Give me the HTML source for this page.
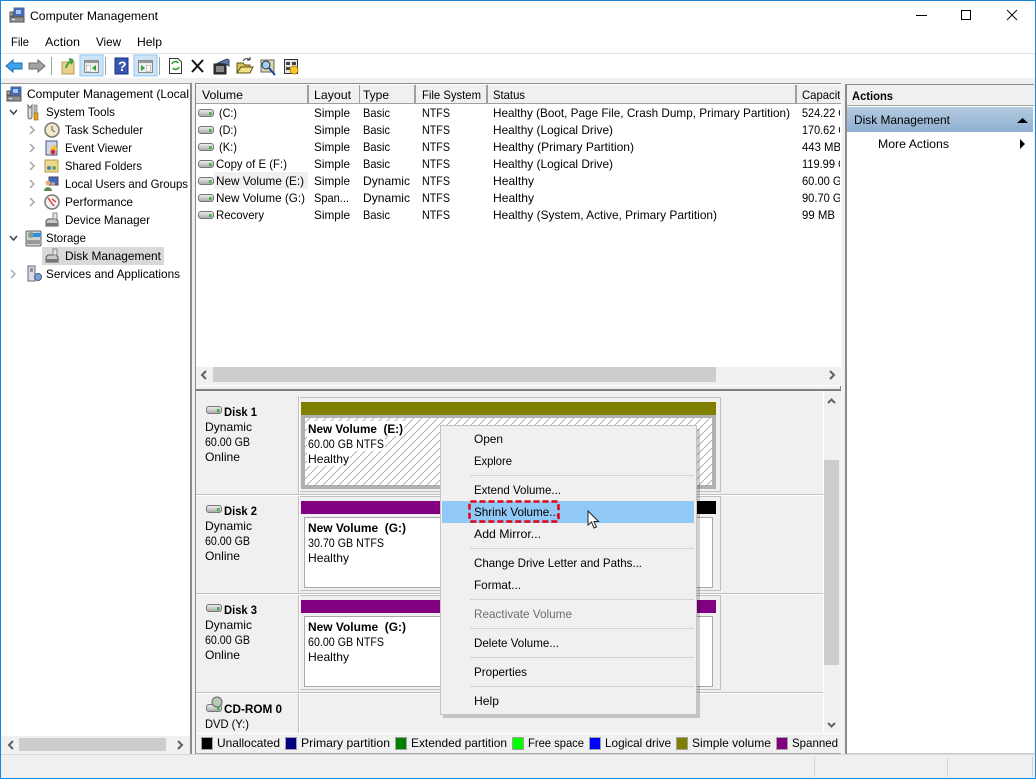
<!DOCTYPE html>
<html><head><meta charset="utf-8"><title>Computer Management</title>
<style>
html,body{margin:0;padding:0;background:#fff;width:1036px;height:779px;overflow:hidden}
svg{display:block}
text{font-family:"Liberation Sans",sans-serif;font-size:12px;fill:#000}
.b{font-weight:bold}
.r{shape-rendering:crispEdges}
</style></head><body>
<svg width="1036" height="779" viewBox="0 0 1036 779" xmlns="http://www.w3.org/2000/svg">
<defs>
<pattern id="h" width="8" height="8" patternUnits="userSpaceOnUse"><path d="M-1 9L9 -1" stroke="#a4a4a4" stroke-width=".8" fill="none"/></pattern>
<linearGradient id="ab" x1="0" y1="0" x2="0" y2="1"><stop offset="0" stop-color="#b4cbe1"/><stop offset="1" stop-color="#8eafd0"/></linearGradient>
<linearGradient id="dr" x1="0" y1="0" x2="0" y2="1"><stop offset="0" stop-color="#f2f2f2"/><stop offset="1" stop-color="#a6a6a6"/></linearGradient>
<clipPath id="capc"><rect x="797" y="84" width="43" height="140"/></clipPath>
<symbol id="drive" viewBox="0 0 16 10" overflow="visible"><rect x=".5" y="1.500" width="15" height="7" rx="2.500" fill="url(#dr)" stroke="#777"/><rect x="11" y="4" width="2.500" height="3" fill="#3fb53f"/></symbol>
<symbol id="comp" viewBox="0 0 16 16" overflow="visible"><rect x="5" y="1" width="10" height="8" fill="#3b69c7" stroke="#5d6b84"/><rect x="7" y="3" width="5" height="4" fill="#a7c8f2"/><path d="M4 5H1V9H4Z" fill="#aab1bb" stroke="#555"/><rect x="1" y="10" width="14" height="5" fill="#8e8e8e" stroke="#555"/><rect x="3" y="12" width="3" height="1" fill="#eee"/></symbol>
<symbol id="mgr" viewBox="0 0 16 16" overflow="visible"><path d="M2 9L4 7H12L14 9V14H2Z" fill="#c8c8c8" stroke="#555"/><rect x="2" y="11" width="12" height="3" fill="#777"/><rect x="9" y="1" width="4" height="6" fill="#e5e5e5" stroke="#888"/></symbol>
</defs>

<!-- window frame -->
<rect class="r" x="0" y="0" width="1036" height="1" fill="#1a86d8"/>
<rect class="r" x="0" y="1" width="1" height="778" fill="#1a86d8"/>
<rect class="r" x="1035" y="1" width="1" height="778" fill="#1a86d8"/>
<rect class="r" x="0" y="778" width="1036" height="1" fill="#1a86d8"/>

<!-- title bar -->
<use href="#comp" x="9" y="7" width="16" height="16"/>
<text x="30" y="20" textLength="128" lengthAdjust="spacingAndGlyphs" fill="#222">Computer Management</text>
<rect class="r" x="916" y="15" width="11" height="1" fill="#000"/>
<rect class="r" x="961.500" y="10.500" width="9" height="9" fill="none" stroke="#000"/>
<path d="M1007 10L1017 20M1017 10L1007 20" stroke="#111" fill="none"/>

<!-- menu -->
<text x="11" y="46" textLength="18" lengthAdjust="spacingAndGlyphs">File</text>
<text x="45" y="46" textLength="35" lengthAdjust="spacingAndGlyphs">Action</text>
<text x="96" y="46" textLength="25" lengthAdjust="spacingAndGlyphs">View</text>
<text x="137" y="46" textLength="25" lengthAdjust="spacingAndGlyphs">Help</text>
<rect class="r" x="1" y="53" width="1034" height="1" fill="#e3e3e3"/>

<!-- toolbar -->
<path d="M6 66L13 60V63H22V69H13V72Z" fill="#3fa2ea" stroke="#1b6fb5"/>
<path d="M45 66L38 60V63H29V69H38V72Z" fill="#a3a3a3" stroke="#6d6d6d"/>
<rect class="r" x="51" y="57" width="1" height="18" fill="#a0a0a0"/>
<path d="M62 62H74V74H62Z" fill="#e8d28e" stroke="#b79b54"/>
<path d="M66 68C67 63 70 61 73 60M73 60L69 59M73 60L71 64" stroke="#3fa53f" stroke-width="2" fill="none"/>
<rect class="r" x="80" y="55" width="23" height="21" fill="#cde4f7" stroke="#90c8f6"/>
<rect class="r" x="84.500" y="60.500" width="14" height="12" fill="#eee" stroke="#8a8a8a"/>
<rect class="r" x="85" y="61" width="13" height="2" fill="#9a9a9a"/>
<rect class="r" x="86" y="65" width="4" height="6" fill="#fff" stroke="#999" stroke-width=".5"/>
<path d="M96 65V71L92 68Z" fill="#2e9e3a"/>
<rect class="r" x="105" y="57" width="1" height="18" fill="#a0a0a0"/>
<rect class="r" x="115" y="58" width="13" height="16" fill="#3557b0" stroke="#1e2f80"/>
<text x="118" y="71" class="b" style="fill:#fff;font-size:14px">?</text>
<rect class="r" x="134" y="55" width="23" height="21" fill="#cde4f7" stroke="#90c8f6"/>
<rect class="r" x="138.500" y="60.500" width="14" height="12" fill="#eee" stroke="#8a8a8a"/>
<rect class="r" x="139" y="61" width="13" height="2" fill="#9a9a9a"/>
<rect class="r" x="146" y="65" width="4" height="6" fill="#fff" stroke="#999" stroke-width=".5"/>
<path d="M141 65V71L145 68Z" fill="#2e9e3a"/>
<rect class="r" x="159" y="57" width="1" height="18" fill="#a0a0a0"/>
<path d="M169.500 58.500H178L181.500 62V73.500H169.500Z" fill="#fff" stroke="#333"/>
<path d="M172 64C173 61 177 61 178 63M179 67C178 70 174 70 173 68" stroke="#2aa02a" stroke-width="1.600" fill="none"/>
<path d="M192 60L203 72M203 60L192 72" stroke="#111" stroke-width="2" fill="none"/>
<path d="M214 64H226V74H214Z" fill="#333" stroke="#222"/>
<path d="M216 67H224M216 69H224M216 71H224" stroke="#ddd" class="r"/>
<path d="M218 63L227 59L229 60V66L226 64Z" fill="#5c7ca8" stroke="#2e4468"/>
<path d="M237 72V63H243L245 65H250V72Z" fill="#d8c25a" stroke="#5d4f14"/>
<path d="M237 73L241 67H253L250 73Z" fill="#efe08a" stroke="#5d4f14"/>
<path d="M243 61C245 58 248 58 250 60M250 60V57M250 60H247" stroke="#333" fill="none"/>
<rect x="261" y="60" width="13" height="12" fill="#dad9a8" stroke="#666"/>
<circle cx="266" cy="65" r="4" fill="#9ed1e8" stroke="#2d2d5a"/>
<path d="M269 68L275 75" stroke="#20409a" stroke-width="2" fill="none"/>
<rect class="r" x="284.500" y="59.500" width="13" height="14" fill="#e5e5e5" stroke="#333"/>
<path d="M286 62H290V65H286ZM292 62H296V65H292ZM286 67H290V70H286Z" fill="#444"/>
<circle cx="294" cy="70" r="4" fill="#f4c92a" stroke="#b28a05"/>

<!-- main background -->
<rect class="r" x="1" y="78" width="1034" height="700" fill="#f0f0f0"/>

<!-- left pane -->
<rect class="r" x="1" y="83" width="189" height="670" fill="#fff"/>
<rect class="r" x="1" y="83" width="189" height="1" fill="#a0a0a0"/>
<rect class="r" x="190" y="83" width="2" height="671" fill="#8b8b8b"/>
<rect class="r" x="1" y="752" width="189" height="1" fill="#c8c8c8"/>
<rect class="r" x="42" y="247" width="122" height="18" fill="#d9d9d9"/>

<use href="#comp" x="6" y="86" width="16" height="16"/>
<text x="27" y="98" textLength="162" lengthAdjust="spacingAndGlyphs">Computer Management (Local</text>
<text x="46" y="116" textLength="69" lengthAdjust="spacingAndGlyphs">System Tools</text>
<text x="65" y="134" textLength="78" lengthAdjust="spacingAndGlyphs">Task Scheduler</text>
<text x="65" y="152" textLength="67" lengthAdjust="spacingAndGlyphs">Event Viewer</text>
<text x="65" y="170" textLength="77" lengthAdjust="spacingAndGlyphs">Shared Folders</text>
<text x="65" y="188" textLength="123" lengthAdjust="spacingAndGlyphs">Local Users and Groups</text>
<text x="65" y="206" textLength="68" lengthAdjust="spacingAndGlyphs">Performance</text>
<text x="65" y="224" textLength="85" lengthAdjust="spacingAndGlyphs">Device Manager</text>
<text x="46" y="242" textLength="40" lengthAdjust="spacingAndGlyphs">Storage</text>
<text x="65" y="260" textLength="96" lengthAdjust="spacingAndGlyphs">Disk Management</text>
<text x="46" y="278" textLength="134" lengthAdjust="spacingAndGlyphs">Services and Applications</text>

<!-- tree arrows -->
<g fill="none" stroke="#404040" stroke-width="1.500"><path d="M10 110L13.500 114L17 110"/><path d="M10 236L13.500 240L17 236"/></g>
<g fill="none" stroke="#a6a6a6" stroke-width="1.500"><path d="M30 126L34 130L30 134"/><path d="M30 144L34 148L30 152"/><path d="M30 162L34 166L30 170"/><path d="M30 180L34 184L30 188"/><path d="M30 198L34 202L30 206"/><path d="M11 270L15 274L11 278"/></g>

<!-- tree icons -->
<path d="M28 105V116C28 120 32 120 32 116V105L30 108Z" fill="#ddd" stroke="#666"/>
<rect x="34" y="105" width="3" height="9" fill="#bbb" stroke="#666" stroke-width=".6"/>
<rect x="34" y="113" width="4" height="7" fill="#e2a71c" stroke="#8a6408" stroke-width=".6"/>
<circle cx="52" cy="130" r="7" fill="#f1e8cc" stroke="#777" stroke-width="1.500"/>
<path d="M52 126V130L55 132" stroke="#555" fill="none"/>
<rect x="46" y="141" width="11" height="14" fill="#cfd6e8" stroke="#4a5a8a"/>
<path d="M54 144L58 150H50Z" fill="#f5c523"/><circle cx="53" cy="152" r="2.500" fill="#cc3333"/>
<rect x="45" y="160" width="13" height="12" fill="#eed88c" stroke="#b59a50"/>
<circle cx="49" cy="168" r="2" fill="#4c7bc0"/><circle cx="54" cy="168" r="2" fill="#6aa84f"/>
<rect x="49" y="177" width="9" height="8" fill="#3b69c7" stroke="#445"/>
<circle cx="48" cy="183" r="2.500" fill="#e0b080"/><path d="M44 191C44 186 52 186 52 191Z" fill="#5a8a4a"/><circle cx="53" cy="184" r="2" fill="#d0a070"/>
<circle cx="52" cy="202" r="7" fill="#f3f3f3" stroke="#777" stroke-width="1.500"/>
<path d="M48 198L54 206M52 199L56 202" stroke="#d22" stroke-width="1.200" fill="none"/>
<use href="#mgr" x="44" y="212" width="16" height="16"/>
<rect x="26" y="231" width="15" height="15" fill="#cdd2d2" stroke="#666" rx="1"/>
<circle cx="31" cy="235" r="3" fill="#8aa08a"/><rect x="33" y="233" width="8" height="4" fill="#2f8fd8"/><rect x="27" y="240" width="13" height="4" fill="#999"/>
<use href="#mgr" x="44" y="248" width="16" height="16"/>
<rect x="28" y="266" width="7" height="15" fill="#d9dde2" stroke="#667"/>
<path d="M30 269H33M30 271H33" stroke="#446" class="r"/>
<circle cx="38" cy="277" r="3.500" fill="#7d9fd0" stroke="#3f5f90"/>

<!-- table pane -->
<rect class="r" x="193" y="83" width="3" height="671" fill="#f0f0f0"/>
<rect class="r" x="195" y="83" width="1" height="671" fill="#8b8b8b"/>
<rect class="r" x="195" y="83" width="646" height="1" fill="#8b8b8b"/>
<rect class="r" x="196" y="84" width="645" height="283" fill="#fff"/>
<rect class="r" x="196" y="85" width="645" height="18" fill="#f0f0f0"/>
<rect class="r" x="196" y="103" width="645" height="1" fill="#a0a0a0"/>
<g fill="#a0a0a0" class="r">
<rect x="307" y="85" width="2" height="18"/><rect x="359" y="85" width="1" height="18"/><rect x="414" y="85" width="2" height="18"/><rect x="486" y="85" width="2" height="18"/><rect x="795" y="85" width="2" height="18"/>
</g>
<text x="202" y="99" textLength="41" lengthAdjust="spacingAndGlyphs">Volume</text>
<text x="314" y="99" textLength="37" lengthAdjust="spacingAndGlyphs">Layout</text>
<text x="363" y="99" textLength="26" lengthAdjust="spacingAndGlyphs">Type</text>
<text x="422" y="99" textLength="59" lengthAdjust="spacingAndGlyphs">File System</text>
<text x="493" y="99" textLength="32" lengthAdjust="spacingAndGlyphs">Status</text>
<g clip-path="url(#capc)"><text x="802" y="99" textLength="44" lengthAdjust="spacingAndGlyphs">Capacity</text>
<text x="802" y="117" textLength="52" lengthAdjust="spacingAndGlyphs">524.22 GB</text>
<text x="802" y="134" textLength="52" lengthAdjust="spacingAndGlyphs">170.62 GB</text>
<text x="802" y="151" textLength="39" lengthAdjust="spacingAndGlyphs">443 MB</text>
<text x="802" y="168" textLength="52" lengthAdjust="spacingAndGlyphs">119.99 GB</text>
<text x="802" y="185" textLength="47" lengthAdjust="spacingAndGlyphs">60.00 GB</text>
<text x="802" y="202" textLength="47" lengthAdjust="spacingAndGlyphs">90.70 GB</text>
<text x="802" y="219" textLength="33" lengthAdjust="spacingAndGlyphs">99 MB</text></g>
<rect class="r" x="214" y="172" width="94" height="17" fill="#f0f0f0"/>
<use href="#drive" x="198" y="108" width="16" height="10"/><use href="#drive" x="198" y="125" width="16" height="10"/><use href="#drive" x="198" y="142" width="16" height="10"/><use href="#drive" x="198" y="159" width="16" height="10"/><use href="#drive" x="198" y="176" width="16" height="10"/><use href="#drive" x="198" y="193" width="16" height="10"/><use href="#drive" x="198" y="210" width="16" height="10"/>
<text x="219" y="117" textLength="18" lengthAdjust="spacingAndGlyphs">(C:)</text>
<text x="219" y="134" textLength="18" lengthAdjust="spacingAndGlyphs">(D:)</text>
<text x="219" y="151" textLength="18" lengthAdjust="spacingAndGlyphs">(K:)</text>
<text x="216" y="168" textLength="71" lengthAdjust="spacingAndGlyphs">Copy of E (F:)</text>
<text x="216" y="185" textLength="88" lengthAdjust="spacingAndGlyphs">New Volume (E:)</text>
<text x="216" y="202" textLength="89" lengthAdjust="spacingAndGlyphs">New Volume (G:)</text>
<text x="216" y="219" textLength="48" lengthAdjust="spacingAndGlyphs">Recovery</text>
<g>
<text x="314" y="117" textLength="36" lengthAdjust="spacingAndGlyphs">Simple</text><text x="314" y="134" textLength="36" lengthAdjust="spacingAndGlyphs">Simple</text><text x="314" y="151" textLength="36" lengthAdjust="spacingAndGlyphs">Simple</text><text x="314" y="168" textLength="36" lengthAdjust="spacingAndGlyphs">Simple</text><text x="314" y="185" textLength="36" lengthAdjust="spacingAndGlyphs">Simple</text><text x="314" y="202" textLength="35" lengthAdjust="spacingAndGlyphs">Span...</text><text x="314" y="219" textLength="36" lengthAdjust="spacingAndGlyphs">Simple</text>
<text x="363" y="117" textLength="27" lengthAdjust="spacingAndGlyphs">Basic</text><text x="363" y="134" textLength="27" lengthAdjust="spacingAndGlyphs">Basic</text><text x="363" y="151" textLength="27" lengthAdjust="spacingAndGlyphs">Basic</text><text x="363" y="168" textLength="27" lengthAdjust="spacingAndGlyphs">Basic</text><text x="363" y="185" textLength="47" lengthAdjust="spacingAndGlyphs">Dynamic</text><text x="363" y="202" textLength="47" lengthAdjust="spacingAndGlyphs">Dynamic</text><text x="363" y="219" textLength="27" lengthAdjust="spacingAndGlyphs">Basic</text>
<text x="422" y="117" textLength="28" lengthAdjust="spacingAndGlyphs">NTFS</text><text x="422" y="134" textLength="28" lengthAdjust="spacingAndGlyphs">NTFS</text><text x="422" y="151" textLength="28" lengthAdjust="spacingAndGlyphs">NTFS</text><text x="422" y="168" textLength="28" lengthAdjust="spacingAndGlyphs">NTFS</text><text x="422" y="185" textLength="28" lengthAdjust="spacingAndGlyphs">NTFS</text><text x="422" y="202" textLength="28" lengthAdjust="spacingAndGlyphs">NTFS</text><text x="422" y="219" textLength="28" lengthAdjust="spacingAndGlyphs">NTFS</text>
<text x="493" y="117" textLength="297" lengthAdjust="spacingAndGlyphs">Healthy (Boot, Page File, Crash Dump, Primary Partition)</text>
<text x="493" y="134" textLength="120" lengthAdjust="spacingAndGlyphs">Healthy (Logical Drive)</text>
<text x="493" y="151" textLength="141" lengthAdjust="spacingAndGlyphs">Healthy (Primary Partition)</text>
<text x="493" y="168" textLength="120" lengthAdjust="spacingAndGlyphs">Healthy (Logical Drive)</text>
<text x="493" y="185" textLength="41" lengthAdjust="spacingAndGlyphs">Healthy</text>
<text x="493" y="202" textLength="41" lengthAdjust="spacingAndGlyphs">Healthy</text>
<text x="493" y="219" textLength="224" lengthAdjust="spacingAndGlyphs">Healthy (System, Active, Primary Partition)</text>
</g>

<!-- h scrollbar -->
<rect class="r" x="196" y="367" width="645" height="16" fill="#f0f0f0"/>
<rect class="r" x="213" y="367" width="503" height="15" fill="#cdcdcd"/>
<path d="M206 371L202 375L206 379" fill="none" stroke="#606060" stroke-width="2"/>
<path d="M830 371L834 375L830 379" fill="none" stroke="#606060" stroke-width="2"/>
<rect class="r" x="196" y="385" width="645" height="1" fill="#fff"/>
<rect class="r" x="195" y="389" width="645" height="2" fill="#808080"/>
<rect class="r" x="840" y="386" width="1" height="5" fill="#808080"/>

<!-- disks area -->
<rect class="r" x="196" y="391" width="628" height="342" fill="#f0f0f0"/>
<rect class="r" x="299" y="396" width="1" height="337" fill="#fff"/>
<rect class="r" x="298" y="396" width="1" height="337" fill="#c0c0c0"/>
<g class="r" fill="#c0c0c0"><rect x="196" y="494" width="628" height="1"/><rect x="196" y="593" width="628" height="1"/><rect x="196" y="692" width="628" height="1"/></g>
<g class="r" fill="#fff"><rect x="196" y="495" width="628" height="1"/><rect x="196" y="594" width="628" height="1"/><rect x="196" y="693" width="628" height="1"/></g>
<g class="r" fill="#c0c0c0">
<rect x="300" y="397" width="421" height="1"/><rect x="720" y="397" width="1" height="95"/><rect x="300" y="491" width="421" height="1"/>
<rect x="300" y="496" width="421" height="1"/><rect x="720" y="496" width="1" height="95"/><rect x="300" y="590" width="421" height="1"/>
<rect x="300" y="595" width="421" height="1"/><rect x="720" y="595" width="1" height="95"/><rect x="300" y="689" width="421" height="1"/>
</g>

<!-- disk 1 -->
<rect class="r" x="301" y="402" width="415" height="13" fill="#808000"/>
<rect class="r" x="301" y="415" width="415" height="74" fill="#b0b0b0"/>
<rect class="r" x="305" y="418" width="407" height="67" fill="#fff"/>
<rect x="305" y="418" width="407" height="67" fill="url(#h)"/>
<rect class="r" x="307" y="421" width="97" height="15" fill="#fff"/>
<rect class="r" x="307" y="436" width="78" height="15" fill="#fff"/>
<rect class="r" x="307" y="451" width="43" height="15" fill="#fff"/>
<!-- disk 2 -->
<rect class="r" x="301" y="501" width="415" height="13" fill="#800080"/>
<rect class="r" x="696" y="501" width="20" height="13" fill="#000"/>
<rect class="r" x="304.500" y="517.500" width="408" height="70" fill="#fff" stroke="#a8a8a8"/>
<!-- disk 3 -->
<rect class="r" x="301" y="600" width="415" height="13" fill="#800080"/>
<rect class="r" x="304.500" y="616.500" width="408" height="70" fill="#fff" stroke="#a8a8a8"/>

<use href="#drive" x="206" y="405" width="16" height="10"/>
<text x="224" y="416" class="b" textLength="33" lengthAdjust="spacingAndGlyphs">Disk 1</text>
<text x="205" y="431" textLength="47" lengthAdjust="spacingAndGlyphs">Dynamic</text>
<text x="205" y="446" textLength="45" lengthAdjust="spacingAndGlyphs">60.00 GB</text>
<text x="205" y="461" textLength="35" lengthAdjust="spacingAndGlyphs">Online</text>
<use href="#drive" x="206" y="504" width="16" height="10"/>
<text x="224" y="515" class="b" textLength="33" lengthAdjust="spacingAndGlyphs">Disk 2</text>
<text x="205" y="530" textLength="47" lengthAdjust="spacingAndGlyphs">Dynamic</text>
<text x="205" y="545" textLength="45" lengthAdjust="spacingAndGlyphs">60.00 GB</text>
<text x="205" y="560" textLength="35" lengthAdjust="spacingAndGlyphs">Online</text>
<use href="#drive" x="206" y="603" width="16" height="10"/>
<text x="224" y="614" class="b" textLength="33" lengthAdjust="spacingAndGlyphs">Disk 3</text>
<text x="205" y="629" textLength="47" lengthAdjust="spacingAndGlyphs">Dynamic</text>
<text x="205" y="644" textLength="45" lengthAdjust="spacingAndGlyphs">60.00 GB</text>
<text x="205" y="659" textLength="35" lengthAdjust="spacingAndGlyphs">Online</text>
<use href="#drive" x="206" y="703" width="16" height="10"/>
<circle cx="217" cy="702" r="5" fill="#b7c9b7" stroke="#666"/>
<text x="224" y="713" class="b" textLength="58" lengthAdjust="spacingAndGlyphs">CD-ROM 0</text>
<text x="205" y="728" textLength="44" lengthAdjust="spacingAndGlyphs">DVD (Y:)</text>

<text x="308" y="433" class="b" textLength="95" lengthAdjust="spacingAndGlyphs" xml:space="preserve">New Volume  (E:)</text>
<text x="308" y="448" textLength="76" lengthAdjust="spacingAndGlyphs">60.00 GB NTFS</text>
<text x="308" y="463" textLength="41" lengthAdjust="spacingAndGlyphs">Healthy</text>
<text x="308" y="532" class="b" textLength="98" lengthAdjust="spacingAndGlyphs" xml:space="preserve">New Volume  (G:)</text>
<text x="308" y="547" textLength="76" lengthAdjust="spacingAndGlyphs">30.70 GB NTFS</text>
<text x="308" y="562" textLength="41" lengthAdjust="spacingAndGlyphs">Healthy</text>
<text x="308" y="631" class="b" textLength="98" lengthAdjust="spacingAndGlyphs" xml:space="preserve">New Volume  (G:)</text>
<text x="308" y="646" textLength="76" lengthAdjust="spacingAndGlyphs">60.00 GB NTFS</text>
<text x="308" y="661" textLength="41" lengthAdjust="spacingAndGlyphs">Healthy</text>

<!-- v scrollbar -->
<rect class="r" x="823" y="391" width="1" height="342" fill="#fff"/>
<rect class="r" x="824" y="391" width="16" height="342" fill="#f0f0f0"/>
<rect class="r" x="824" y="460" width="15" height="205" fill="#cdcdcd"/>
<path d="M828 403L831.500 399.500L835 403" fill="none" stroke="#606060" stroke-width="2"/>
<path d="M828 723L831.500 726.500L835 723" fill="none" stroke="#606060" stroke-width="2"/>

<!-- legend -->
<rect class="r" x="196" y="733" width="645" height="1" fill="#fff"/>
<rect class="r" x="196" y="734" width="645" height="19" fill="#f0f0f0"/>
<g class="r" stroke="#a0a0a0">
<rect x="201.500" y="737.500" width="11" height="12" fill="#000"/>
<rect x="285.500" y="737.500" width="11" height="12" fill="#000080"/>
<rect x="395.500" y="737.500" width="11" height="12" fill="#008000"/>
<rect x="512.500" y="737.500" width="11" height="12" fill="#00ff00"/>
<rect x="589.500" y="737.500" width="11" height="12" fill="#0000ff"/>
<rect x="676.500" y="737.500" width="11" height="12" fill="#808000"/>
<rect x="776.500" y="737.500" width="11" height="12" fill="#800080"/>
</g>
<text x="217" y="747" textLength="63" lengthAdjust="spacingAndGlyphs">Unallocated</text>
<text x="301" y="747" textLength="89" lengthAdjust="spacingAndGlyphs">Primary partition</text>
<text x="411" y="747" textLength="96" lengthAdjust="spacingAndGlyphs">Extended partition</text>
<text x="528" y="747" textLength="56" lengthAdjust="spacingAndGlyphs">Free space</text>
<text x="605" y="747" textLength="66" lengthAdjust="spacingAndGlyphs">Logical drive</text>
<text x="692" y="747" textLength="79" lengthAdjust="spacingAndGlyphs">Simple volume</text>
<text x="792" y="747" textLength="46" lengthAdjust="spacingAndGlyphs">Spanned</text>
<rect class="r" x="841" y="84" width="1" height="670" fill="#f8f8f8"/>
<rect class="r" x="196" y="753" width="645" height="1" fill="#a8a8a8"/>

<!-- left bottom scrollbar -->
<rect class="r" x="1" y="736" width="189" height="17" fill="#f0f0f0"/>
<rect class="r" x="19" y="738" width="147" height="13" fill="#cdcdcd"/>
<path d="M13 741L9 745L13 749" fill="none" stroke="#606060" stroke-width="2"/>
<path d="M178 741L182 745L178 749" fill="none" stroke="#606060" stroke-width="2"/>

<!-- actions -->
<rect class="r" x="846" y="84" width="188" height="670" fill="#fff"/>
<rect class="r" x="845" y="84" width="2" height="670" fill="#8b8b8b"/>
<rect class="r" x="845" y="84" width="189" height="1" fill="#8b8b8b"/>
<rect class="r" x="847" y="85" width="187" height="20" fill="#f0f0f0"/>
<rect class="r" x="847" y="105" width="187" height="1" fill="#a8a8a8"/>
<rect class="r" x="847" y="107" width="186" height="25" fill="url(#ab)"/>
<rect class="r" x="847" y="753" width="187" height="1" fill="#c8c8c8"/>
<text x="852" y="100" class="b" textLength="41" lengthAdjust="spacingAndGlyphs">Actions</text>
<text x="854" y="124" textLength="96" lengthAdjust="spacingAndGlyphs">Disk Management</text>
<path d="M1017 123H1028L1022.500 118Z" fill="#000"/>
<text x="878" y="148" textLength="71" lengthAdjust="spacingAndGlyphs">More Actions</text>
<path d="M1020 139V149L1025 144Z" fill="#000"/>

<!-- status bar -->
<rect class="r" x="1" y="754" width="1034" height="24" fill="#f0f0f0"/>
<rect class="r" x="1" y="754" width="1034" height="1" fill="#d8d8d8"/>
<rect class="r" x="814" y="757" width="1" height="20" fill="#d4d4d4"/>
<rect class="r" x="947" y="757" width="1" height="20" fill="#d4d4d4"/>
<rect class="r" x="1032" y="757" width="1" height="20" fill="#d4d4d4"/>

<!-- context menu -->
<rect x="443" y="429" width="257" height="289" fill="#000" opacity=".18"/>
<rect class="r" x="440.500" y="425.500" width="256" height="289" fill="#f0f0f0" stroke="#c4c4c4"/>
<rect class="r" x="442" y="501" width="252" height="22" fill="#91c9f7"/>
<g class="r" fill="#d4d4d4"><rect x="470" y="475" width="224" height="1"/><rect x="470" y="548" width="224" height="1"/><rect x="470" y="599" width="224" height="1"/><rect x="470" y="628" width="224" height="1"/><rect x="470" y="657" width="224" height="1"/><rect x="470" y="686" width="224" height="1"/></g>
<text x="474" y="443" textLength="29" lengthAdjust="spacingAndGlyphs">Open</text>
<text x="474" y="465" textLength="38" lengthAdjust="spacingAndGlyphs">Explore</text>
<text x="474" y="494" textLength="87" lengthAdjust="spacingAndGlyphs">Extend Volume...</text>
<text x="474" y="516" textLength="85" lengthAdjust="spacingAndGlyphs">Shrink Volume...</text>
<text x="474" y="538" textLength="67" lengthAdjust="spacingAndGlyphs">Add Mirror...</text>
<text x="474" y="567" textLength="168" lengthAdjust="spacingAndGlyphs">Change Drive Letter and Paths...</text>
<text x="474" y="589" textLength="47" lengthAdjust="spacingAndGlyphs">Format...</text>
<text x="474" y="618" textLength="98" lengthAdjust="spacingAndGlyphs" style="fill:#6d6d6d">Reactivate Volume</text>
<text x="474" y="647" textLength="85" lengthAdjust="spacingAndGlyphs">Delete Volume...</text>
<text x="474" y="676" textLength="53" lengthAdjust="spacingAndGlyphs">Properties</text>
<text x="474" y="705" textLength="25" lengthAdjust="spacingAndGlyphs">Help</text>
<rect x="469.500" y="501.500" width="89" height="20" rx="1" fill="none" stroke="#e60012" stroke-width="2.500" stroke-dasharray="6 3"/>
<path d="M588 511V525L591.500 522L594 528L596.500 527L594 521.500H598.500Z" fill="#fff" stroke="#222"/>
</svg>
</body></html>
